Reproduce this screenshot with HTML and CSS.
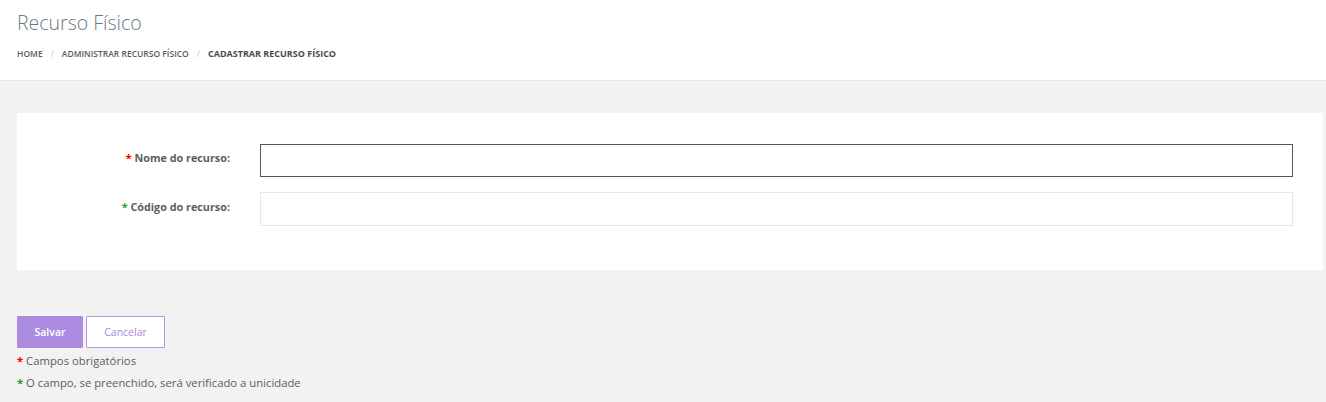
FILE: index.html
```html
<!DOCTYPE html>
<html lang="pt-BR">
<head>
<meta charset="utf-8">
<title>Recurso Físico</title>
<link rel="stylesheet" href="styles.css">
</head>
<body>
<header class="page-header">
  <h1 class="page-title">Recurso Físico</h1>
  <nav class="breadcrumb">
    <a class="crumb">Home</a>
    <span class="sep">/</span>
    <a class="crumb">Administrar Recurso Físico</a>
    <span class="sep">/</span>
    <span class="crumb current">Cadastrar Recurso Físico</span>
  </nav>
</header>
<main class="content">
  <section class="card">
    <div class="form-row">
      <label class="form-label"><span class="req red">*</span> Nome do recurso:</label>
      <input class="form-input focused" type="text">
    </div>
    <div class="form-row">
      <label class="form-label"><span class="req green">*</span> Código do recurso:</label>
      <input class="form-input tall" type="text">
    </div>
  </section>
  <div class="actions">
    <button class="btn btn-primary">Salvar</button>
    <button class="btn btn-outline">Cancelar</button>
  </div>
  <p class="note"><span class="req red">*</span> Campos obrigatórios</p>
  <p class="note"><span class="req green">*</span> O campo, se preenchido, será verificado a unicidade</p>
</main>
</body>
</html>
```
FILE: styles.css
```css
* { box-sizing: border-box; }
html, body { margin: 0; padding: 0; }
body {
  font-family: "Open Sans", "Liberation Sans", sans-serif;
  background: #f2f2f2;
  color: #555;
  height: 402px;
  overflow: hidden;
}
.page-header {
  background: #fff;
  height: 81px;
  border-bottom: 1px solid #e7e7e7;
  padding: 9px 17px 0;
}
.page-title {
  margin: 0;
  font-size: 19.5px;
  font-weight: 300;
  color: #697882;
  line-height: 28px;
}
.breadcrumb {
  margin-top: 11px;
  font-size: 8.5px;
  font-weight: 600;
  text-transform: uppercase;
  color: #555;
  display: flex;
  align-items: center;
  line-height: 12px;
}
.crumb { color: #5b5b5b; }
.crumb.current { font-weight: 700; font-size: 9px; color: #4a4a4a; }
.sep { color: #c4c4c4; margin: 0 8px; font-weight: 400; }
.content {
  padding: 32px 3px 0 17px;
}
.card {
  background: #fff;
  padding: 31px 30px 44px 0;
  display: flex;
  flex-direction: column;
  gap: 15px;
}
.form-row {
  display: grid;
  grid-template-columns: 213px 1fr;
  column-gap: 30px;
  align-items: center;
}
.form-label {
  text-align: right;
  font-size: 10.8px;
  font-weight: 700;
  color: #5d5d5d;
  padding-bottom: 6px;
}
.req { font-weight: 700; }
.req.red { color: #ff0000; }
.req.green { color: #2e9e2e; }
.form-input {
  height: 33px;
  border: 1px solid #e6e6e6;
  background: #fff;
  font: inherit;
  outline: none;
}
.form-input.tall { height: 34px; }
.form-input.focused { border-color: #555; }
.actions {
  margin-top: 46px;
  display: flex;
  gap: 3px;
}
.btn {
  height: 32px;
  font-family: inherit;
  font-size: 10.5px;
  font-weight: 600;
  border-radius: 1px;
  cursor: pointer;
  padding: 0;
}
.btn-primary {
  width: 66px;
  background: #ab8ce0;
  border: 1px solid #ab8ce0;
  color: #fff;
}
.btn-outline {
  width: 79px;
  background: #fff;
  border: 1px solid #b794ea;
  color: #a888de;
  font-weight: 400;
}
.note {
  margin: 0;
  font-size: 11.3px;
  color: #5d5d5d;
  line-height: 22px;
}
.actions + .note { margin-top: 2px; }
```
